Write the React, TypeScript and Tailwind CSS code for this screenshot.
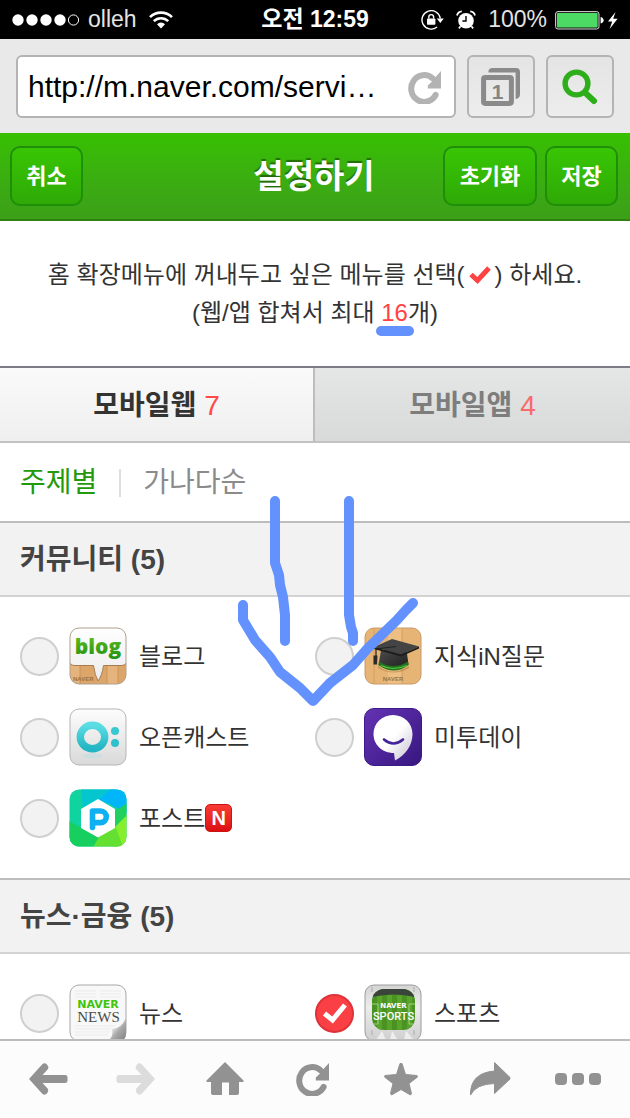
import { useState } from "react";
import type { ComponentType } from "react";

interface ServiceItem {
  id: string;
  label: string;
  icon: ComponentType;
  isNew?: boolean;
}

interface ServiceGroup {
  id: string;
  title: string;
  count: number;
  items: ServiceItem[];
}

/* ---------- status bar icons ---------- */

function SignalDots() {
  return (
    <svg width="68" height="14" viewBox="0 0 68 14" aria-hidden="true">
      <circle cx="6" cy="7" r="5.7" fill="#fff" />
      <circle cx="20" cy="7" r="5.7" fill="#fff" />
      <circle cx="34" cy="7" r="5.7" fill="#fff" />
      <circle cx="48" cy="7" r="5.7" fill="#fff" />
      <circle cx="61.5" cy="7" r="5.1" fill="none" stroke="#fff" strokeWidth="1" />
    </svg>
  );
}

function WifiIcon() {
  return (
    <svg width="24" height="18" viewBox="0 0 24 18" fill="none" stroke="#fff" strokeWidth="2.6" aria-hidden="true">
      <path d="M1 6.2a15.6 15.6 0 0 1 22 0" />
      <path d="M4.8 10.2a10.2 10.2 0 0 1 14.4 0" />
      <path d="M8 13.2a5.7 5.7 0 0 1 8 0L12 17.6z" fill="#fff" stroke="none" />
    </svg>
  );
}

function RotationLockIcon() {
  return (
    <svg width="23" height="20" viewBox="0 0 23 20" fill="none" aria-hidden="true">
      <path d="M19.3 8.5A9.2 9.2 0 1 0 16 17" stroke="#fff" strokeWidth="1.4" />
      <path d="M15.8 8.6h7L19.3 13z" fill="#fff" />
      <rect x="6" y="8.4" width="8.4" height="6.4" rx=".8" fill="#fff" />
      <path d="M7.8 8.6V7a2.4 2.4 0 0 1 4.8 0v1.6" stroke="#fff" strokeWidth="1.4" />
    </svg>
  );
}

function AlarmIcon() {
  return (
    <svg width="20" height="20" viewBox="0 0 20 20" fill="none" aria-hidden="true">
      <circle cx="10" cy="10.8" r="7.8" fill="#fff" />
      <path d="M10 6v5H6.4" stroke="#000" strokeWidth="1.4" />
      <path d="M1 5.4Q2 1.6 5.8 1.4M14.2 1.4Q18 1.6 19 5.4" stroke="#fff" strokeWidth="1.8" />
      <path d="m4.6 16.4-1.8 2M15.4 16.4l1.8 2" stroke="#fff" strokeWidth="1.6" />
    </svg>
  );
}

function BatteryIcon() {
  return (
    <svg width="63" height="20" viewBox="0 0 63 20" aria-hidden="true">
      <rect x=".6" y="1.6" width="43.4" height="17.4" rx="2.4" fill="#111" stroke="#d8d8d8" />
      <rect x="2" y="3" width="40.6" height="14.6" rx="1" fill="#4cd964" />
      <path d="M45.6 7q3 .8 3 3.3t-3 3.3z" fill="#fff" />
      <path d="M60.5 2 53 11.4h4.2L54.6 19l8-10.2h-4.4z" fill="#fff" />
    </svg>
  );
}

/* ---------- browser icons ---------- */

function ReloadIcon({ color }: { color: string }) {
  return (
    <svg width="34" height="34" viewBox="0 0 34 34" aria-hidden="true">
      <path d="M24.5 8.2A13 13.4 0 1 0 27.6 25" fill="none" stroke={color} strokeWidth="6" strokeLinecap="round" />
      <path d="M33 1v17.600H19.800V15.500L23.500 12 28 6.500z" fill={color} />
    </svg>
  );
}

function WindowsIcon() {
  return (
    <svg width="40" height="40" viewBox="0 0 40 40" fill="none" aria-hidden="true">
      <path d="M7.5 4Q8 1 11.5 1H35q4 0 4 4v22.5q0 4-4.4 4.4V5.4H7.5z" fill="#8a8a8a" />
      <rect x="2.6" y="10.6" width="27.8" height="25.8" rx="1.6" stroke="#8a8a8a" strokeWidth="5" />
      <text x="16.5" y="31.5" textAnchor="middle" fontSize="21" fontWeight="700" fill="#858585">
        1
      </text>
    </svg>
  );
}

function SearchIcon() {
  return (
    <svg width="36" height="36" viewBox="0 0 36 36" fill="none" stroke="#2fae1c" aria-hidden="true">
      <circle cx="14.5" cy="14.5" r="11.4" strokeWidth="5.4" />
      <path d="m23.5 24 8.5 8" strokeWidth="6" strokeLinecap="round" />
    </svg>
  );
}

/* ---------- service icons ---------- */

function BlogIcon() {
  return (
    <svg width="58" height="58" viewBox="0 0 58 58" aria-hidden="true">
      <defs>
        <linearGradient id="blogWhite" x1="0" y1="0" x2="0" y2="1">
          <stop offset="0" stopColor="#fff" />
          <stop offset="1" stopColor="#ececec" />
        </linearGradient>
        <linearGradient id="blogGreen" x1="0" y1="0" x2="0" y2="1">
          <stop offset="0" stopColor="#6cc51d" />
          <stop offset="1" stopColor="#1f8f12" />
        </linearGradient>
        <clipPath id="blogClip">
          <rect x="1" y="1" width="56" height="56" rx="9" />
        </clipPath>
      </defs>
      <g clipPath="url(#blogClip)">
        <path d="M0 30h58v28H0z" fill="#dca56a" />
        <path d="M0 30h11v28H0zM38 30h11v28H38z" fill="#e5b47c" />
        <path d="M11 38v20M38 38v20M49 38v20" stroke="#c08a52" strokeWidth=".7" />
        <path d="M0 0h58v33q0 5.500-6 5.500H34.500Q33 49 29 54q-3-5-4.500-15.500H6q-6 0-6-5.500z" fill="url(#blogWhite)" stroke="#a87c4e" strokeWidth="1" />
      </g>
      <rect x="1" y="1" width="56" height="56" rx="9" fill="none" stroke="#b0a08e" strokeWidth="1" />
      <text x="29" y="26.500" textAnchor="middle" fontSize="21" fontWeight="800" fill="url(#blogGreen)" className="[font-family:'Open_Sans',sans-serif]">
        blog
      </text>
      <text x="4" y="53.5" fontSize="6" fontWeight="700" fill="#a0703e">
        NAVER
      </text>
    </svg>
  );
}

function KinIcon() {
  return (
    <svg width="58" height="58" viewBox="0 0 58 58" aria-hidden="true">
      <defs>
        <linearGradient id="kinCap" x1="0" y1="0" x2="1" y2="1">
          <stop offset="0" stopColor="#4c4c4c" />
          <stop offset="1" stopColor="#1c1c1c" />
        </linearGradient>
      </defs>
      <rect x="1" y="1" width="56" height="56" rx="9" fill="#e6b576" stroke="#c79a68" />
      <path d="M24 1.5h14v55H24z" fill="#efc388" opacity=".7" />
      <path d="M10 1.5v55M38 1.5v55" stroke="#cf9a58" strokeWidth=".8" />
      <path d="M14 39q14 11 31 0v2q-15 9-31 0z" fill="#a97738" opacity=".5" />
      <path d="M17 23h25.500l2 14.500Q30 48 14.500 38z" fill="url(#kinCap)" />
      <path d="M15 34.500q14 9 29 0l.5 3.500Q30 49 14.500 38z" fill="#23731f" />
      <path d="M17 38.500q12 6 26 0" fill="none" stroke="#52c83e" strokeWidth="1.200" />
      <path d="M10 20 28 12l27 7.500-18 8z" fill="#444" />
      <path d="M10 20 37 27.500l18-8v2L37 29.500 10 22z" fill="#1d1d1d" />
      <path d="M32 19.500 12 22v9" fill="none" stroke="#222" strokeWidth="1.200" />
      <path d="M9.500 28.500h4L13 37.500H9.500z" fill="#2a2a2a" />
      <text x="29" y="53.500" textAnchor="middle" fontSize="6" fontWeight="700" fill="#a0743e">
        NAVER
      </text>
    </svg>
  );
}

function OpencastIcon() {
  return (
    <svg width="58" height="58" viewBox="0 0 58 58" aria-hidden="true">
      <defs>
        <linearGradient id="castBg" x1="0" y1="0" x2="0" y2="1">
          <stop offset="0" stopColor="#fdfdfd" />
          <stop offset="1" stopColor="#d9d9d9" />
        </linearGradient>
        <linearGradient id="castBlue" x1="0" y1="0" x2="0" y2="1">
          <stop offset="0" stopColor="#5bdde3" />
          <stop offset="1" stopColor="#22b5c3" />
        </linearGradient>
      </defs>
      <rect x="1" y="1" width="56" height="56" rx="9" fill="url(#castBg)" stroke="#b5b5b5" />
      <ellipse cx="23.500" cy="48" rx="10" ry="2.500" fill="#b9dde0" opacity=".5" />
      <ellipse cx="23.500" cy="29" rx="12.200" ry="11.700" fill="none" stroke="url(#castBlue)" strokeWidth="7.400" />
      <circle cx="46" cy="23" r="4" fill="#38c8d2" />
      <circle cx="46" cy="35" r="4" fill="#2fc0cb" />
    </svg>
  );
}

function Me2dayIcon() {
  return (
    <svg width="58" height="58" viewBox="0 0 58 58" aria-hidden="true">
      <defs>
        <linearGradient id="meBg" x1="0" y1="0" x2="1" y2="1">
          <stop offset="0" stopColor="#6433b4" />
          <stop offset="1" stopColor="#371780" />
        </linearGradient>
        <linearGradient id="meFace" x1="0" y1="0" x2="1" y2="1">
          <stop offset="0.500" stopColor="#fff" />
          <stop offset="1" stopColor="#c4bfce" />
        </linearGradient>
      </defs>
      <rect x=".5" y=".5" width="57" height="57" rx="9.500" fill="url(#meBg)" stroke="#3b1b86" />
      <path
        d="M29 7C40 7 48.500 15.500 48.500 26 48.500 37 42 47 31 52.500L30 45C18 45 9.500 36.500 9.500 26S18 7 29 7z"
        fill="url(#meFace)"
      />
      <path d="M20 31.500q9.500 8 19 0" fill="none" stroke="#45239a" strokeWidth="2.600" strokeLinecap="round" />
    </svg>
  );
}

function PostIcon() {
  return (
    <svg width="58" height="58" viewBox="0 0 58 58" aria-hidden="true">
      <defs>
        <clipPath id="postClip">
          <rect x=".5" y=".5" width="57" height="57" rx="9.500" />
        </clipPath>
      </defs>
      <g clipPath="url(#postClip)">
        <path d="M0 0h58v58H0z" fill="#10d3a0" />
        <path d="M12 0h34l-6 14-26 6z" fill="#05c6cf" />
        <path d="M42 0h16v24L30 10z" fill="#00b6f8" />
        <path d="M58 14v16L46 38V22z" fill="#1fd05e" />
        <path d="M58 26v32H44l2-20z" fill="#86ee2c" />
        <path d="M46 36 54 58H24l5-10z" fill="#63e032" />
        <path d="M0 32l14 8 16 8-6 10H0z" fill="#16cf5f" />
      </g>
      <path d="M29 10 46 20v19L29 48.500 12 39V20z" fill="#fff" />
      <path d="M23.500 38.500V22h8a5.800 5.800 0 0 1 0 11.600H24" fill="none" stroke="#0fb0f2" strokeWidth="5.600" strokeLinecap="round" strokeLinejoin="round" />
    </svg>
  );
}

function NewsIcon() {
  return (
    <svg width="58" height="58" viewBox="0 0 58 58" aria-hidden="true">
      <defs>
        <linearGradient id="newsCurl" x1="0" y1="0" x2="1" y2="1">
          <stop offset="0.300" stopColor="#f4f4f4" />
          <stop offset="0.600" stopColor="#a8a8a8" />
          <stop offset="1" stopColor="#7d7d7d" />
        </linearGradient>
      </defs>
      <rect x="1" y="1" width="56" height="56" rx="9" fill="#f8f8f8" stroke="#a8a8a8" />
      <path d="M6 7h21M31 7h21M6 10h21M31 10h21M6 13h21M31 13h21M6 42h40M6 45h36M6 48h34M6 51h33" stroke="#ebebeb" />
      <path d="M57 34v16q0 7-8 7H38q7-3 5-12 9 0 14-11z" fill="url(#newsCurl)" />
      <text x="29" y="24" textAnchor="middle" fontSize="11" fontWeight="900" fill="#3fc40c" className="[font-family:'DejaVu_Sans',sans-serif]">
        NAVER
      </text>
      <text x="29.500" y="37.500" textAnchor="middle" fontSize="15" fill="#4a4a4a" className="[font-family:'Liberation_Serif',serif]">
        NEWS
      </text>
    </svg>
  );
}

function SportsIcon() {
  return (
    <svg width="58" height="58" viewBox="0 0 58 58" aria-hidden="true">
      <defs>
        <linearGradient id="sportBg" x1="0" y1="0" x2="0" y2="1">
          <stop offset="0" stopColor="#d4d4d4" />
          <stop offset="0.400" stopColor="#ececec" />
          <stop offset="1" stopColor="#cfcfcf" />
        </linearGradient>
        <clipPath id="sportField">
          <rect x="8" y="5" width="43" height="41" rx="12" />
        </clipPath>
      </defs>
      <rect x="1" y="1" width="56" height="56" rx="9" fill="url(#sportBg)" stroke="#9c9c9c" />
      <path d="M12 56l6-9 4 9zM26 56l2-9 6 9zM40 56l2-9 8 9z" fill="#fff" opacity=".6" />
      <path d="M8 3v5M50 3v5M8 46v5M50 46v5" stroke="#aaa" />
      <g clipPath="url(#sportField)">
        <path d="M8 5h43v42H8z" fill="#4a9322" />
        <path d="M13 10h5v37h-5zM23 10h5v37h-5zM33 10h5v37h-5zM43 10h5v37h-5z" fill="#59a52b" />
        <path d="M8 5h43v8q-21-5-43 0z" fill="#3b443b" />
        <path d="M8 20h6v20H8M51 20h-6v20h6" fill="none" stroke="#9fd07a" />
      </g>
      <text x="29.500" y="23.500" textAnchor="middle" fontSize="7" fontWeight="700" fill="#fff" className="[font-family:'DejaVu_Sans',sans-serif]">
        NAVER
      </text>
      <text x="29.500" y="35.500" textAnchor="middle" fontSize="11" fontWeight="500" fill="#fff" className="[font-family:Roboto,sans-serif]">
        SPORTS
      </text>
    </svg>
  );
}

/* ---------- toolbar icons ---------- */

function ArrowIcon({ color, flip }: { color: string; flip?: boolean }) {
  return (
    <svg width="40" height="40" viewBox="0 0 40 40" className={flip ? "-scale-x-100" : ""} aria-hidden="true">
      <path
        d="M1 20 14.500 5Q17 3.500 19 5.500T20 10L14.500 16H37q2.500 0 2.500 2v4q0 2-2.500 2H14.500L20 30q1 2.500-1 4.500T14.500 35z"
        fill={color}
      />
    </svg>
  );
}

function HomeIcon() {
  return (
    <svg width="38" height="34" viewBox="0 0 38 34" fill="#929292" aria-hidden="true">
      <path d="M19 0 37.500 18.500V20H33v11q0 2-2 2h-8V20.500h-7V33H8q-3 0-3-2V20H.500v-1.500z" />
    </svg>
  );
}

function StarIcon() {
  return (
    <svg width="36" height="34" viewBox="0 0 36 34" fill="#929292" stroke="#929292" strokeLinejoin="round" aria-hidden="true">
      <path d="M17 1.500h2L22.500 12.500 34 13.500 34.500 15 26 21.500 28.500 31.500 27.500 33 18 27.500 8.500 33 7.500 31.500 10 21.500 1.500 15 2 13.500 13.500 12.500z" />
    </svg>
  );
}

function ShareIcon() {
  return (
    <svg width="42" height="36" viewBox="0 0 42 36" fill="#929292" stroke="#929292" strokeLinejoin="round" aria-hidden="true">
      <path d="M25.500 1.500 41 16.500V18L25.500 32.500V22.500Q7 23 1.500 34 1 12 25.500 10z" />
    </svg>
  );
}

function MoreIcon() {
  return (
    <svg width="46" height="12" viewBox="0 0 46 12" fill="#929292" aria-hidden="true">
      <rect x="0" y="0" width="12" height="12" rx="4" />
      <rect x="17" y="0" width="12" height="12" rx="4" />
      <rect x="34" y="0" width="12" height="12" rx="4" />
    </svg>
  );
}

const groups: ServiceGroup[] = [
  {
    id: "community",
    title: "커뮤니티",
    count: 5,
    items: [
      { id: "blog", label: "블로그", icon: BlogIcon },
      { id: "kin", label: "지식iN질문", icon: KinIcon },
      { id: "opencast", label: "오픈캐스트", icon: OpencastIcon },
      { id: "me2day", label: "미투데이", icon: Me2dayIcon },
      { id: "post", label: "포스트", icon: PostIcon, isNew: true },
    ],
  },
  {
    id: "news",
    title: "뉴스·금융",
    count: 5,
    items: [
      { id: "news", label: "뉴스", icon: NewsIcon },
      { id: "sports", label: "스포츠", icon: SportsIcon },
    ],
  },
];

const toolbar = [
  { id: "back", label: "뒤로", icon: <ArrowIcon color="#929292" /> },
  { id: "forward", label: "앞으로", icon: <ArrowIcon color="#dcdcdc" flip /> },
  { id: "home", label: "홈", icon: <HomeIcon /> },
  { id: "reload", label: "새로고침", icon: <ReloadIcon color="#929292" /> },
  { id: "star", label: "즐겨찾기", icon: <StarIcon /> },
  { id: "share", label: "공유", icon: <ShareIcon /> },
  { id: "more", label: "더보기", icon: <MoreIcon /> },
];

const greenButton =
  "h-[60px] rounded-[10px] border-2 border-[#1f8f0a] bg-linear-to-b from-[#38c604] to-[#2fa906] text-[22px] font-bold text-white";
const chromeButton =
  "flex h-[63px] w-[68px] shrink-0 items-center justify-center rounded-md border-2 border-[#b4b4b4] bg-linear-to-b from-[#e4e4e4] to-[#ededed]";

function StatusBar() {
  return (
    <div className="grid h-[39px] shrink-0 grid-cols-[1fr_auto_1fr] items-center bg-black px-3 text-[23px] leading-none text-white">
      <div className="flex items-center gap-2">
        <SignalDots />
        <span className="text-[#e4e4e4]">olleh</span>
        <span className="pl-1">
          <WifiIcon />
        </span>
      </div>
      <span className="font-bold">오전 12:59</span>
      <div className="flex items-center justify-end">
        <RotationLockIcon />
        <span className="px-3">
          <AlarmIcon />
        </span>
        <span className="pr-2 text-[#e4e4e4]">100%</span>
        <BatteryIcon />
      </div>
    </div>
  );
}

function AddressBar() {
  return (
    <div className="flex shrink-0 gap-[11px] bg-[#e9e9e9] px-4 pt-4 pb-[15px]">
      <div className="flex h-[63px] min-w-0 flex-1 items-center rounded-md border-2 border-[#b4b4b4] bg-white pr-3 pl-[10px]">
        <input
          type="text"
          aria-label="주소"
          defaultValue="http://m.naver.com/servi…"
          className="min-w-0 flex-1 bg-transparent text-[30px] text-black outline-none"
        />
        <button type="button" aria-label="새로고침">
          <ReloadIcon color="#b3b3b3" />
        </button>
      </div>
      <button type="button" aria-label="탭" className={chromeButton}>
        <WindowsIcon />
      </button>
      <button type="button" aria-label="검색" className={chromeButton}>
        <SearchIcon />
      </button>
    </div>
  );
}

function ServiceRow({ item, checked, onToggle }: { item: ServiceItem; checked: boolean; onToggle: () => void }) {
  const Icon = item.icon;

  return (
    <label className="flex h-[58px] items-center">
      <span className="grid shrink-0 place-items-center">
        <input
          type="checkbox"
          checked={checked}
          onChange={onToggle}
          className="col-start-1 row-start-1 size-[39px] appearance-none rounded-full border-2 border-[#cfcfcf] bg-[#f2f2f2] checked:border-[#dd3338] checked:bg-[#fb4045]"
        />
        {checked && (
          <svg width="28" height="24" viewBox="0 0 28 24" className="pointer-events-none relative col-start-1 row-start-1" aria-hidden="true">
            <path d="M3.500 12.500 11.500 19 24 4" fill="none" stroke="#fff" strokeWidth="5" />
          </svg>
        )}
      </span>
      <span className="mr-3 ml-[10px] shrink-0">
        <Icon />
      </span>
      <span className="pt-0.5 text-2xl text-[#333]">{item.label}</span>
      {item.isNew && (
        <span className="flex h-7 w-[27px] items-center justify-center rounded-[5px] border border-[#c91414] bg-linear-to-b from-[#f83a34] to-[#dc0d10] text-xl font-bold text-white">
          N
        </span>
      )}
    </label>
  );
}

export default function App() {
  const [selected, setSelected] = useState<string[]>(["sports"]);

  const toggle = (id: string) =>
    setSelected((prev) => (prev.includes(id) ? prev.filter((s) => s !== id) : [...prev, id]));

  return (
    <div className="flex h-screen flex-col bg-white [font-family:'Liberation_Sans','Noto_Sans_CJK_KR',sans-serif]">
      <StatusBar />
      <AddressBar />

      <main className="relative min-h-0 flex-1 overflow-y-auto [scrollbar-width:none]">
        <header className="grid h-[88px] grid-cols-[1fr_auto_1fr] items-center border-b-2 border-[#2f8212] bg-linear-to-b from-[#37c000] to-[#3c9f18] pr-3 pl-[10px]">
          <div>
            <button type="button" className={`${greenButton} w-[73px]`}>
              취소
            </button>
          </div>
          <h1 className="pt-0.5 text-[33px] font-bold text-white [text-shadow:0_-2px_1px_rgba(0,0,0,0.4)]">설정하기</h1>
          <div className="flex justify-end gap-2">
            <button type="button" className={`${greenButton} w-[94px]`}>
              초기화
            </button>
            <button type="button" className={`${greenButton} w-[73px]`}>
              저장
            </button>
          </div>
        </header>

        <p className="pt-[35px] pb-[34px] text-center text-2xl leading-[38px] text-[#333]">
          홈 확장메뉴에 꺼내두고 싶은 메뉴를 선택(
          <svg width="22" height="20" viewBox="0 0 22 20" className="mx-1 inline-block align-[-2px]" aria-hidden="true">
            <path d="M2 9.500 8.500 15.500 20 3" fill="none" stroke="#ff4343" strokeWidth="5" />
          </svg>
          ) 하세요.
          <br />
          (웹/앱 합쳐서 최대{" "}
          <span className="relative text-[#ff4343]">
            16
            <span className="absolute top-full left-1/2 h-[10px] w-[38px] -translate-x-1/2 rounded-full bg-[#6391fd]" />
          </span>
          개)
        </p>

        <div role="tablist" className="grid h-[77px] grid-cols-2 border-t-2 border-b-2 border-t-[#7c7c87] border-b-[#c2c2c2] text-[28px]">
          <button
            type="button"
            role="tab"
            aria-selected="true"
            className="border-r-2 border-[#bdbdbd] bg-linear-to-b from-[#fafafa] to-[#efefef] pt-0.5 font-bold text-[#333]"
          >
            모바일웹 <span className="font-normal text-[#ff4a4a]">7</span>
          </button>
          <button
            type="button"
            role="tab"
            aria-selected="false"
            className="bg-linear-to-b from-[#e5e7e6] to-[#d8dad9] pt-0.5 font-bold text-[#7d7d7d]"
          >
            모바일앱 <span className="font-normal text-[#f96b6b]">4</span>
          </button>
        </div>

        <div className="flex h-[78px] items-center px-5 pt-0.5 text-[28px]">
          <button type="button" className="text-[#239a0b]">
            주제별
          </button>
          <span className="mx-[22px] h-7 w-[2px] bg-[#dedede]" />
          <button type="button" className="text-[#8b8b8b]">
            가나다순
          </button>
        </div>

        {groups.map(({ id, title, count, items }) => (
          <section key={id}>
            <h2 className="flex h-[76px] items-center border-t-2 border-b-2 border-t-[#bdbdbd] border-b-[#d3d3d3] bg-[#f2f2f2] px-5 pt-0.5 text-[28px] font-bold text-[#444]">
              {title} ({count})
            </h2>
            <div className="grid grid-cols-2 gap-y-[23px] px-5 pt-[30px] pb-[31px]">
              {items.map((item) => (
                <ServiceRow
                  key={item.id}
                  item={item}
                  checked={selected.includes(item.id)}
                  onToggle={() => toggle(item.id)}
                />
              ))}
            </div>
          </section>
        ))}

        {/* hand-drawn arrow over the list */}
        <svg
          width="184"
          height="214"
          viewBox="0 0 184 214"
          fill="none"
          stroke="#6391fd"
          strokeWidth="10"
          strokeLinecap="round"
          strokeLinejoin="round"
          className="pointer-events-none absolute top-[362px] left-[237px]"
          aria-hidden="true"
        >
          <path d="M38 6V68L42 80 43 90 46 102 48 120V146" />
          <path d="M112 6V120L114 132 116 138V146" />
          <path d="M6 110V125L18 145 33 162 43 177 63 193 76 206 93 188 116 170 131 153 160 125 169 115 176 108" />
        </svg>
      </main>

      <nav className="grid h-[79px] shrink-0 grid-cols-7 border-t-2 border-[#bcbcbc] bg-[#fcfcfc] pr-2 pb-0.5 pl-1">
        {toolbar.map(({ id, label, icon }) => (
          <button key={id} type="button" aria-label={label} className="flex items-center justify-center">
            {icon}
          </button>
        ))}
      </nav>
    </div>
  );
}
